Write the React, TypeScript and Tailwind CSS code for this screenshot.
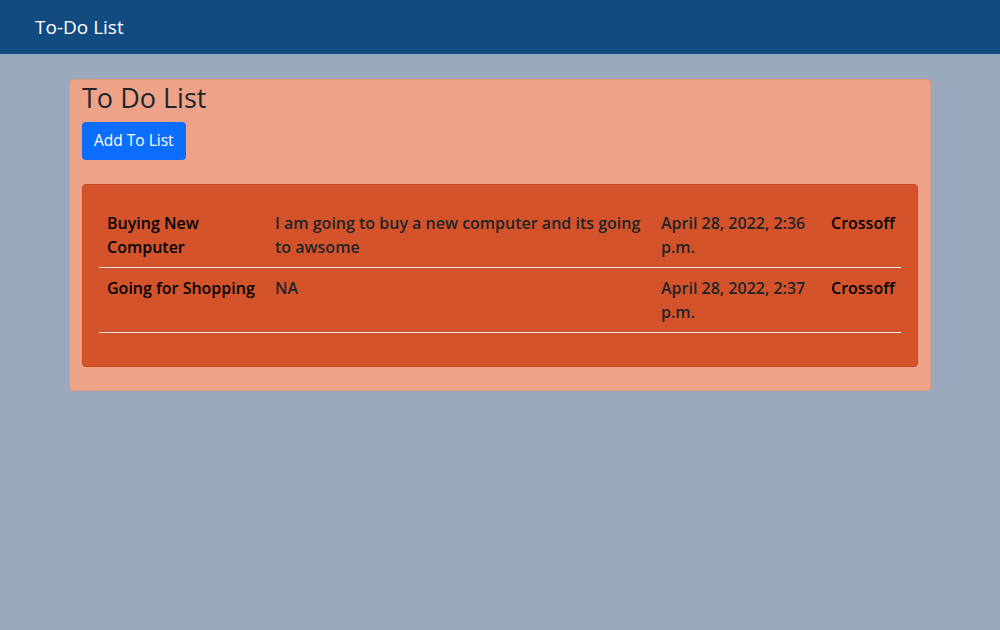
export default function App() {
  const rows = [
    {
      title: "Buying New Computer",
      desc: "I am going to buy a new computer and its going to awsome",
      date: "April 28, 2022, 2:36 p.m.",
    },
    {
      title: "Going for Shopping",
      desc: "NA",
      date: "April 28, 2022, 2:37 p.m.",
    },
  ];
  return (
    <div
      className="min-h-[630px] bg-[#99a8bb] flex flex-col"
      style={{ fontFamily: '"Open Sans", "Noto Sans", sans-serif' }}
    >
      <nav className="h-[54px] bg-[#124b80] flex items-center px-[35px]">
        <span className="text-white text-[19px] leading-none">To-Do List</span>
      </nav>
      <div className="flex-1 flex flex-col">
        <div className="mx-[69px] mt-[25px] w-[862px] bg-[#eea389] border border-[#e39a80] rounded-[4px] px-[12px] pt-[2px] pb-[23px]">
          <h3 className="text-[27px] leading-[32px] text-[#212529] font-normal mb-[8px]">
            To Do List
          </h3>
          <button className="h-[38px] px-[12px] bg-[#0d6efd] text-white text-[15.5px] rounded-[4px]">
            Add To List
          </button>
          <div className="mt-[24px] bg-[#d5532b] border border-[#c44a24] rounded-[4px] px-[16px] pt-[18px] pb-[17px]">
            <table className="w-full table-fixed border-collapse text-[16px] leading-[24px] font-semibold mb-[16px]">
              <colgroup>
                <col className="w-[168px]" />
                <col className="w-[386px]" />
                <col className="w-[170px]" />
                <col />
              </colgroup>
              <tbody>
                {rows.map((r) => (
                  <tr key={r.title} className="border-b border-[#dee2e6] align-top">
                    <td className="p-[8px] text-black">{r.title}</td>
                    <td className="p-[8px] text-[#212529]">{r.desc}</td>
                    <td className="p-[8px] text-[#212529]">{r.date}</td>
                    <td className="p-[8px] text-black">Crossoff</td>
                  </tr>
                ))}
              </tbody>
            </table>
          </div>
        </div>
      </div>
    </div>
  );
}
